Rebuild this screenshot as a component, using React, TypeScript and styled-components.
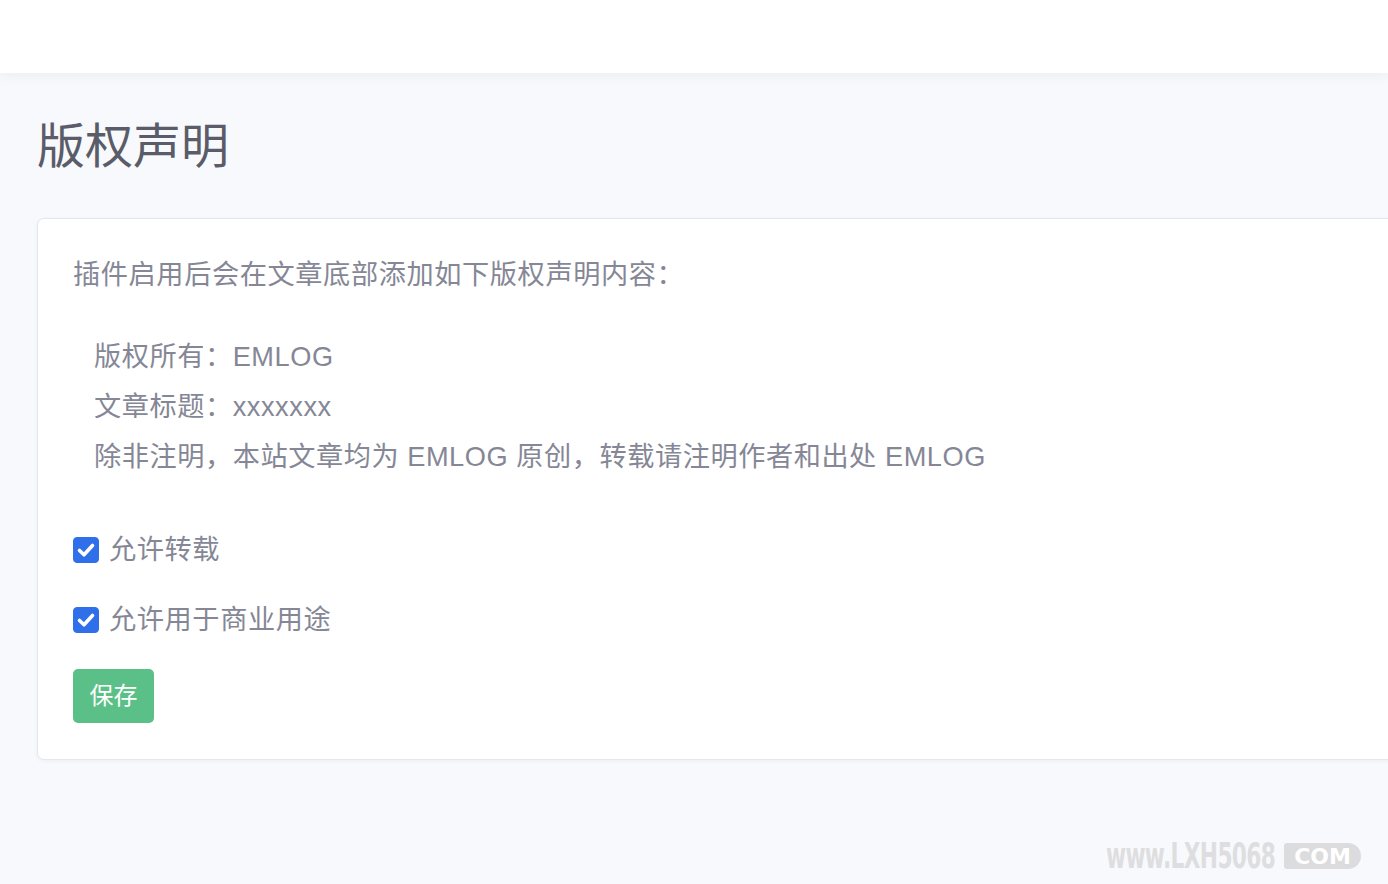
import styled, {createGlobalStyle} from "styled-components";

const GlobalStyle = createGlobalStyle`
  html, body {
    margin: 0;
    padding: 0;
    background: #f8f9fc;
    overflow: hidden;
  }
  body {
    font-family: "Liberation Sans", "Noto Sans CJK SC", sans-serif;
    color: #858796;
  }
`;

const Page = styled.div`
  position: relative;
  width: 1388px;
  height: 884px;
  overflow: hidden;
  background: #f8f9fc;
`;

const Topbar = styled.header`
  height: 73px;
  background: #ffffff;
  box-shadow: 0 2px 12px 0 rgba(58, 59, 69, 0.07);
`;

const Content = styled.main`
  padding: 45px 0 0 37px;
`;

const Title = styled.h1`
  margin: 0 0 42px;
  font-size: 48px;
  line-height: 58px;
  font-weight: 400;
  color: #5a5c69;
`;

const Card = styled.section`
  width: 1400px;
  background: #ffffff;
  border: 1px solid #e3e6f0;
  border-radius: 7px;
  box-shadow: 0 1px 4px rgba(58, 59, 69, 0.05);
  padding: 36px 35px 36px;
  box-sizing: border-box;
`;

const Intro = styled.p`
  margin: 0;
  font-size: 27.2px;
  letter-spacing: 0.6px;
  line-height: 40.8px;
`;

const Notice = styled.div`
  margin: 36px 0 0;
  padding-left: 21px;
  font-size: 27.2px;
  letter-spacing: 0.55px;
  line-height: 50px;
`;

const Options = styled.div`
  margin-top: 48px;
  display: flex;
  flex-direction: column;
  gap: 29px;
`;

const CheckRow = styled.label`
  display: flex;
  align-items: center;
  gap: 10px;
  font-size: 27.2px;
  letter-spacing: 0.6px;
  line-height: 40.8px;
  cursor: pointer;
`;

const HiddenInput = styled.input`
  display: none;
`;

const Box = styled.span<{ $checked: boolean }>`
  width: 26px;
  height: 26px;
  border-radius: 4px;
  box-sizing: border-box;
  display: flex;
  align-items: center;
  justify-content: center;
  background: ${(p) => (p.$checked ? "#2f6fe9" : "#ffffff")};
  border: 1px solid ${(p) => (p.$checked ? "#2f6fe9" : "#b7b9cc")};
`;

const SaveButton = styled.button`
  margin-top: 29px;
  display: block;
  width: 81px;
  height: 54px;
  padding: 0 0 6px;
  border: none;
  border-radius: 5px;
  background: #5bc087;
  color: #ffffff;
  font-family: "Liberation Sans", "Noto Sans CJK SC", sans-serif;
  font-size: 24px;
  cursor: pointer;
`;

const Watermark = styled.div`
  position: absolute;
  left: 1106px;
  top: 842px;
  display: flex;
  align-items: center;
  gap: 3px;
  font-family: "DejaVu Sans", sans-serif;
  font-weight: 700;
`;

const MarkText = styled.span`
  display: inline-block;
  font-size: 35px;
  line-height: 28px;
  color: #dedee0;
  letter-spacing: -1px;
  transform: scaleX(0.62);
  transform-origin: left center;
  width: 175px;
  white-space: nowrap;
`;

const MarkPill = styled.span`
  display: flex;
  align-items: center;
  justify-content: center;
  width: 77px;
  height: 26px;
  border-radius: 3px 13px 13px 3px;
  background: #dcdcde;
  color: #ffffff;
  font-size: 22px;
`;

function CheckIcon() {
  return (
    <svg width="22" height="22" viewBox="0 0 22 22" fill="none">
      <path d="M4.5 11.5 L9 15.8 L17.5 6.5" stroke="#ffffff" strokeWidth="3.6" strokeLinecap="round" strokeLinejoin="round" />
    </svg>
  );
}

function Option({ label }: { label: string }) {
  return (
    <CheckRow>
      <HiddenInput type="checkbox" defaultChecked />
      <Box $checked={true}>
        <CheckIcon />
      </Box>
      {label}
    </CheckRow>
  );
}

export default function App() {
  return (
    <Page>
      <GlobalStyle />
      <Topbar />
      <Content>
        <Title>版权声明</Title>
        <Card>
          <Intro>插件启用后会在文章底部添加如下版权声明内容：</Intro>
          <Notice>
            <div>版权所有：EMLOG</div>
            <div>文章标题：xxxxxxx</div>
            <div>除非注明，本站文章均为 EMLOG 原创，转载请注明作者和出处 EMLOG</div>
          </Notice>
          <Options>
            <Option label="允许转载" />
            <Option label="允许用于商业用途" />
          </Options>
          <SaveButton type="button">保存</SaveButton>
        </Card>
      </Content>
      <Watermark>
        <MarkText>www.LXH5068</MarkText>
        <MarkPill>COM</MarkPill>
      </Watermark>
    </Page>
  );
}
